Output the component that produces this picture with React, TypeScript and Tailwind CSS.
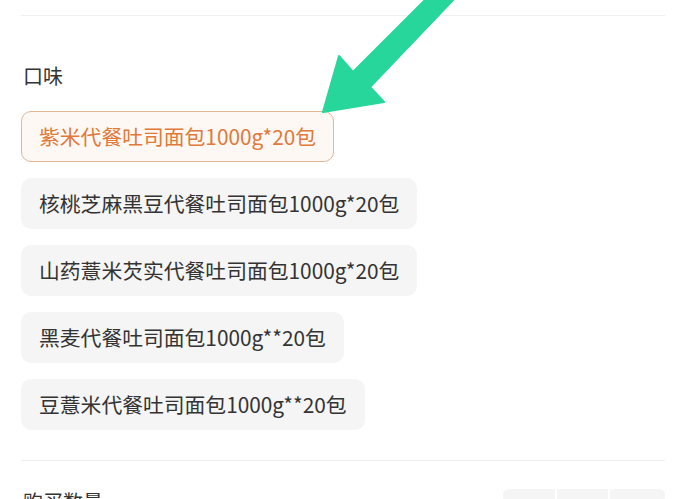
import React from 'react';

const flavors = [
  '紫米代餐吐司面包1000g*20包',
  '核桃芝麻黑豆代餐吐司面包1000g*20包',
  '山药薏米芡实代餐吐司面包1000g*20包',
  '黑麦代餐吐司面包1000g**20包',
  '豆薏米代餐吐司面包1000g**20包',
];

const Arrow = () => (
  <svg className="absolute left-0 top-0 pointer-events-none" width="686" height="140" viewBox="0 0 686 140">
    <polygon
      points="427,-2 455,-2 370,87 384,102 323,112 339,56 353,72"
      fill="#27d69b"
      stroke="#27d69b"
      strokeLinejoin="round"
      strokeWidth="2"
    />
  </svg>
);

export default function App() {
  return (
    <div
      className="relative w-[686px] h-[499px] overflow-hidden bg-white px-[21px]"
      style={{ fontFamily: '"Noto Sans CJK SC", "Noto Sans", sans-serif' }}
    >
      <div className="pt-[15px]">
        <div className="h-px bg-[#f0f0f0]" />
      </div>
      <div className="mt-[47px] text-[20px] leading-[26px] text-[#333] pl-[2px]">口味</div>
      <div className="mt-[22px] flex flex-col items-start gap-[16px]">
        {flavors.map((f, i) => (
          <div
            key={f}
            className={
              i === 0
                ? 'h-[51px] flex items-center px-[17px] rounded-[10px] border border-[#dfb898] bg-[#fdf8f3] text-[#e0793a] text-[20.8px]'
                : 'h-[51px] flex items-center px-[18px] rounded-[10px] bg-[#f5f5f5] text-[#333] text-[20.8px]'
            }
          >
            {f}
          </div>
        ))}
      </div>
      <div className="mt-[30px] h-px bg-[#f0f0f0]" />
      <div className="mt-[28px] flex items-start justify-between">
        <div className="text-[20px] leading-[26px] text-[#333] pl-[2px]">购买数量</div>
        <div className="flex gap-[2px]">
          <div className="w-[52px] h-[40px] bg-[#f5f5f5] rounded-l-[6px]" />
          <div className="w-[51px] h-[40px] bg-[#f5f5f5]" />
          <div className="w-[55px] h-[40px] bg-[#f5f5f5] rounded-r-[6px]" />
        </div>
      </div>
      <Arrow />
    </div>
  );
}
